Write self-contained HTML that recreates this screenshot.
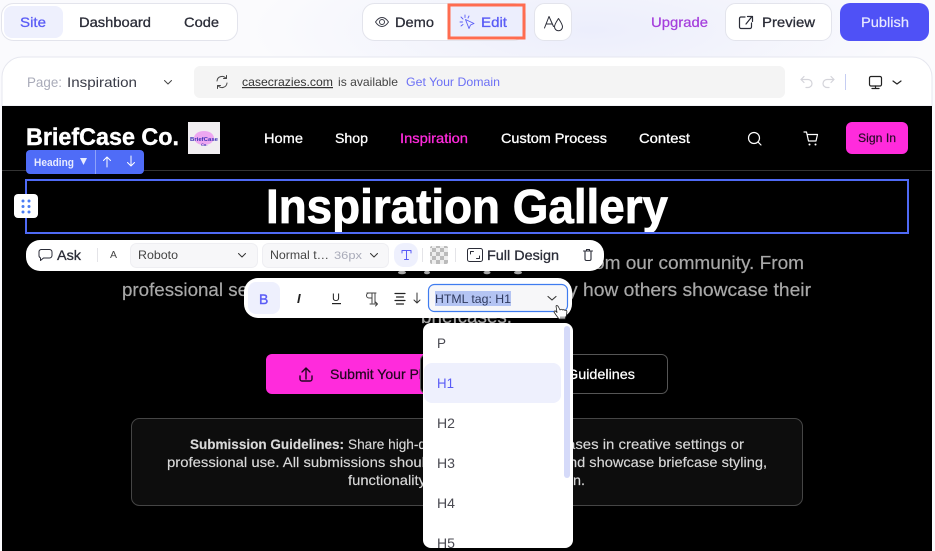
<!DOCTYPE html>
<html><head><meta charset="utf-8"><title>Editor</title>
<style>
html,body{margin:0;padding:0;width:935px;height:551px;overflow:hidden;background:#f9f9fd}
svg{display:block;position:absolute;left:0;top:0}
text{font-family:"Liberation Sans",sans-serif;white-space:pre}
.ic{fill:none;stroke-linecap:round;stroke-linejoin:round}
</style></head><body>
<svg width="935" height="551" viewBox="0 0 935 551" xmlns="http://www.w3.org/2000/svg">
<defs>
<radialGradient id="g" cx="50%" cy="50%" r="50%"><stop offset="0" stop-color="#eceefc"/><stop offset="1" stop-color="#fbfbfd"/></radialGradient>
<pattern id="ck" width="8" height="8" patternUnits="userSpaceOnUse"><rect width="8" height="8" fill="#eee"/><rect width="4" height="4" fill="#bbb"/><rect x="4" y="4" width="4" height="4" fill="#bbb"/></pattern>
<clipPath id="dd"><rect x="423" y="323" width="150" height="225" rx="8"/></clipPath>
</defs>
<rect width="935" height="551" fill="#fafafd"/>
<rect x="250" y="-60" width="685" height="180" fill="url(#g)"/>

<!-- top left tabs -->
<rect x="1.5" y="3.5" width="236" height="37" rx="12" fill="#fff" stroke="#e3e4ec"/>
<rect x="4" y="6" width="59" height="32" rx="8" fill="#eef0fd"/>
<text x="20" y="27" font-size="14" fill="#5a5cf6" stroke="#5a5cf6" stroke-width=".3" textLength="26" lengthAdjust="spacingAndGlyphs">Site</text>
<text x="79" y="27" font-size="14" fill="#2b2d38" stroke="#2b2d38" stroke-width=".3" textLength="72" lengthAdjust="spacingAndGlyphs">Dashboard</text>
<text x="184" y="27" font-size="14" fill="#2b2d38" stroke="#2b2d38" stroke-width=".3" textLength="35" lengthAdjust="spacingAndGlyphs">Code</text>

<!-- demo / edit -->
<rect x="362.5" y="3.5" width="163" height="37" rx="12" fill="#fff" stroke="#e3e4ec"/>
<rect x="449" y="5" width="75" height="33" fill="#eceefd" stroke="#ff6c50" stroke-width="3"/>
<g class="ic" stroke="#3a3c48" stroke-width="1"><path d="M375.500 22c2-3 4.300-4.500 6.500-4.500s4.500 1.500 6.500 4.500c-2 3-4.300 4.500-6.500 4.500s-4.500-1.500-6.500-4.500z"/><circle cx="382" cy="22" r="2.500"/></g>
<text x="395" y="27" font-size="14" fill="#2b2d38" stroke="#2b2d38" stroke-width=".3" textLength="39" lengthAdjust="spacingAndGlyphs">Demo</text>
<g class="ic" stroke="#5a5cf6" stroke-width=".9"><path d="M465.500 19.500l8.500 4-3.500 1.500-1.500 3.500z"/><path d="M461 17l2 2M465 15v2.500M460 22h2.500M461 26l2-1.500M469 16l-1 2"/></g>
<text x="481" y="27" font-size="14" fill="#5a5cf6" stroke="#5a5cf6" stroke-width=".3" textLength="26" lengthAdjust="spacingAndGlyphs">Edit</text>

<!-- theme -->
<rect x="534.500" y="3.500" width="37" height="37" rx="10" fill="#fff" stroke="#e3e4ec"/>
<g class="ic" stroke="#2b2d38" stroke-width="1"><path d="M544.500 28l4.500-11.500 4.500 10M546 24h6"/><path d="M558.500 18.500c2.300 3.500 4 5.800 4 8.300a4 4 0 0 1-8 0c0-2.500 1.700-4.800 4-8.300z"/></g>

<!-- right top -->
<text x="651" y="27" font-size="14" fill="#a53fdc" stroke="#a53fdc" stroke-width=".25" textLength="57" lengthAdjust="spacingAndGlyphs">Upgrade</text>
<rect x="725.500" y="3.500" width="106" height="37" rx="10" fill="#fff" stroke="#e3e4ec"/>
<g class="ic" stroke="#2b2d38" stroke-width="1.200"><path d="M745 17h-4a1.500 1.500 0 0 0-1.500 1.500v8.500a1.500 1.500 0 0 0 1.500 1.500h9a1.500 1.500 0 0 0 1.500-1.500v-4"/><path d="M746 24l6-7.500M747.500 16.500h5v5"/></g>
<text x="762" y="27" font-size="14" fill="#2b2d38" stroke="#2b2d38" stroke-width=".3" textLength="53" lengthAdjust="spacingAndGlyphs">Preview</text>
<rect x="840" y="3" width="89" height="38" rx="10" fill="#4f51f6"/>
<text x="861" y="27" font-size="14" fill="#e8e9ff" stroke="#e8e9ff" stroke-width=".2" textLength="48" lengthAdjust="spacingAndGlyphs">Publish</text>

<!-- panel -->
<path d="M2 106V77a20 20 0 0 1 20-20H912a20 20 0 0 1 20 20V106z" fill="#fff" stroke="#e6e7ef"/>
<text x="27" y="87" font-size="14" fill="#a9abb9" textLength="35" lengthAdjust="spacingAndGlyphs">Page:</text>
<text x="67" y="87" font-size="14" fill="#3a3c48" textLength="70" lengthAdjust="spacingAndGlyphs">Inspiration</text>
<path class="ic" d="M164.500 80.500l3.500 3.500 3.500-3.500" stroke="#444" stroke-width="1"/>
<rect x="194" y="66" width="591" height="32" rx="6" fill="#f4f4f4"/>
<g class="ic" stroke="#444" stroke-width="1"><path d="M217 81a5 5 0 0 1 9-2.500M227 83a5 5 0 0 1-9 2.500M226.500 75.500v3h-3M217.500 88.500v-3h3"/></g>
<text x="242" y="86" font-size="12" fill="#333" textLength="91" lengthAdjust="spacingAndGlyphs" text-decoration="underline">casecrazies.com</text>
<text x="338" y="86" font-size="12" fill="#444" textLength="60" lengthAdjust="spacingAndGlyphs">is available</text>
<text x="406" y="86" font-size="12" fill="#6c70f5" textLength="94" lengthAdjust="spacingAndGlyphs">Get Your Domain</text>
<g class="ic" stroke="#d4d4da" stroke-width="1.200"><path d="M801 79.500h7a3.800 3.800 0 0 1 0 8h-2M801 79.500l3-3M801 79.500l3 3"/><path d="M834 79.500h-7a3.800 3.800 0 0 0 0 8h2M834 79.500l-3-3M834 79.500l-3 3"/></g>
<rect x="845" y="74" width="1" height="16" fill="#c5cdf2"/>
<g class="ic" stroke="#222" stroke-width="1.200"><rect x="869.500" y="76.500" width="12" height="9.500" rx="1.500"/><path d="M875.500 86v2.500M872 88.500h7"/><path d="M893 81l4 3 4-3"/></g>

<!-- black site -->
<rect x="2" y="106" width="930" height="445" fill="#000"/>
<text x="26" y="145" font-size="24" font-weight="700" fill="#fff" stroke="#fff" stroke-width=".4" textLength="153" lengthAdjust="spacingAndGlyphs">BriefCase Co.</text>
<rect x="188" y="122" width="32" height="32" fill="#f1eef1"/>
<ellipse cx="204" cy="138" rx="10" ry="7" fill="#e96df0" opacity=".55"/>
<text x="190" y="141" font-size="5.500" font-weight="700" fill="#3c2fb5" textLength="28" lengthAdjust="spacingAndGlyphs">BriefCase</text>
<text x="201" y="146" font-size="4" font-weight="700" fill="#3c2fb5">Co.</text>
<g font-size="14" fill="#fff" stroke="#fff" stroke-width=".3">
<text x="264" y="143" textLength="39" lengthAdjust="spacingAndGlyphs">Home</text>
<text x="335" y="143" textLength="33" lengthAdjust="spacingAndGlyphs">Shop</text>
<text x="400" y="143" textLength="68" lengthAdjust="spacingAndGlyphs" fill="#ff2bdc" stroke="#ff2bdc">Inspiration</text>
<text x="501" y="143" textLength="106" lengthAdjust="spacingAndGlyphs">Custom Process</text>
<text x="639" y="143" textLength="51" lengthAdjust="spacingAndGlyphs">Contest</text>
</g>
<g class="ic" stroke="#fff" stroke-width="1.200"><circle cx="754" cy="138" r="5.500"/><path d="M758 142l3 3"/><path d="M804 132h2.500l2 9h7.500l1.500-6.500h-10.500"/></g>
<circle cx="809.500" cy="144.500" r="1" fill="#fff"/><circle cx="815.500" cy="144.500" r="1" fill="#fff"/>
<rect x="846" y="122" width="62" height="32" rx="6" fill="#ff2bdc"/>
<text x="858" y="142" font-size="12" fill="#2a0a28" stroke="#2a0a28" stroke-width=".2" textLength="38" lengthAdjust="spacingAndGlyphs">Sign In</text>
<rect x="2" y="170" width="930" height="1" fill="#333"/>

<!-- heading -->
<text x="266" y="223" font-size="48" font-weight="700" fill="#fff" stroke="#fff" stroke-width=".8" textLength="402" lengthAdjust="spacingAndGlyphs">Inspiration Gallery</text>
<rect x="26" y="180" width="882" height="53" fill="none" stroke="#4f6af5" stroke-width="2"/>
<rect x="26" y="150" width="118" height="24" rx="4" fill="#4f6cf7"/>
<text x="34" y="166" font-size="11" font-weight="700" fill="#e8ecff" textLength="40" lengthAdjust="spacingAndGlyphs">Heading</text>
<path d="M80 158h7l-3.500 7z" fill="#e8ecff"/>
<rect x="95" y="150" width="1" height="24" fill="#8ea2fa"/>
<g class="ic" stroke="#fff" stroke-width="1"><path d="M107 167v-10M103.500 160.500l3.500-3.500 3.500 3.500M131 156v10M127.500 162.500l3.500 3.500 3.500-3.500"/></g>
<rect x="14" y="194" width="24" height="24" rx="4" fill="#fff"/>
<g fill="#4a7df5"><circle cx="23" cy="201" r="1.500"/><circle cx="29" cy="201" r="1.500"/><circle cx="23" cy="206.500" r="1.500"/><circle cx="29" cy="206.500" r="1.500"/><circle cx="23" cy="212" r="1.500"/><circle cx="29" cy="212" r="1.500"/></g>

<!-- paragraph -->
<g font-size="18" fill="#a8a8a8" stroke="#a8a8a8" stroke-width=".2">
<text x="594" y="269" textLength="210" lengthAdjust="spacingAndGlyphs">om our community. From</text>
<text x="122" y="296" textLength="126" lengthAdjust="spacingAndGlyphs">professional se</text>
<text x="568" y="296" textLength="243" lengthAdjust="spacingAndGlyphs">y how others showcase their</text>
<text x="421" y="323" textLength="91" lengthAdjust="spacingAndGlyphs">briefcases.</text>
</g>
<g fill="#a8a8a8"><ellipse cx="402" cy="272.500" rx="4" ry="1.800"/><ellipse cx="427" cy="272.500" rx="3" ry="1.800"/><ellipse cx="487" cy="272.500" rx="3.500" ry="1.800"/><ellipse cx="518" cy="272.500" rx="4" ry="1.800"/></g>

<!-- buttons -->
<rect x="266" y="354" width="200" height="40" rx="6" fill="#ff2bdc"/>
<g class="ic" stroke="#22061f" stroke-width="1.400"><path d="M306 379v-10M302 372l4-4 4 4M300 376v3a2 2 0 0 0 2 2h8a2 2 0 0 0 2-2v-3"/></g>
<text x="330" y="379" font-size="14" fill="#22061f" stroke="#22061f" stroke-width=".25" textLength="92" lengthAdjust="spacingAndGlyphs">Submit Your Pl</text>
<rect x="420.500" y="354.500" width="247" height="39" rx="6" fill="#000" stroke="#555"/>
<text x="567" y="379" font-size="14" fill="#fff" stroke="#fff" stroke-width=".25" textLength="68" lengthAdjust="spacingAndGlyphs">Guidelines</text>

<!-- card -->
<rect x="131.500" y="418.500" width="671" height="87" rx="8" fill="#0d0d0d" stroke="#454545"/>
<g font-size="14" fill="#d8d8d8" stroke="#d8d8d8" stroke-width=".15">
<text x="190" y="449" font-weight="700" textLength="154" lengthAdjust="spacingAndGlyphs">Submission Guidelines:</text>
<text x="348" y="449" textLength="78" lengthAdjust="spacingAndGlyphs">Share high-q</text>
<text x="567" y="449" textLength="177" lengthAdjust="spacingAndGlyphs">ases in creative settings or</text>
<text x="167" y="467" textLength="258" lengthAdjust="spacingAndGlyphs">professional use. All submissions shoul</text>
<text x="569" y="467" textLength="198" lengthAdjust="spacingAndGlyphs">nd showcase briefcase styling,</text>
<text x="348" y="485" textLength="78" lengthAdjust="spacingAndGlyphs">functionality</text>
<text x="573" y="485" textLength="12" lengthAdjust="spacingAndGlyphs">n.</text>
</g>

<!-- toolbar 1 -->
<rect x="26" y="240" width="578" height="31" rx="14" fill="#fff"/>
<path class="ic" d="M41 249.500h8.500a2.500 2.500 0 0 1 2.500 2.500v3.500a2.500 2.500 0 0 1-2.500 2.500h-6l-3 2.500v-2.600a2.500 2.500 0 0 1-1.500-2.400v-3.500a2.500 2.500 0 0 1 2-2.500z" stroke="#2b2d38" stroke-width="1"/>
<text x="57" y="260" font-size="14" fill="#2b2d38" stroke="#2b2d38" stroke-width=".3" textLength="24" lengthAdjust="spacingAndGlyphs">Ask</text>
<rect x="97" y="248" width="1" height="14" fill="#e4e4e8"/>
<text x="110" y="258" font-size="10" fill="#444" textLength="7" lengthAdjust="spacingAndGlyphs">A</text>
<rect x="130.500" y="243.500" width="127" height="24" rx="6" fill="#f7f7f9" stroke="#eeeef2"/>
<text x="138" y="259" font-size="12" fill="#444" textLength="40" lengthAdjust="spacingAndGlyphs">Roboto</text>
<path class="ic" d="M238.500 253.500l3.500 3.500 3.500-3.500" stroke="#333" stroke-width="1"/>
<rect x="262.500" y="243.500" width="126" height="24" rx="6" fill="#f7f7f9" stroke="#eeeef2"/>
<text x="270" y="259" font-size="12" fill="#444" textLength="59" lengthAdjust="spacingAndGlyphs">Normal t…</text>
<text x="334" y="259" font-size="11" fill="#a9abb9" textLength="28" lengthAdjust="spacingAndGlyphs">36px</text>
<path class="ic" d="M370.500 253.500l3.500 3.500 3.500-3.500" stroke="#333" stroke-width="1"/>
<rect x="394" y="243" width="24" height="24" rx="10" fill="#eef0fd"/>
<g class="ic" stroke="#5a5cf6" stroke-width="1"><path d="M402 253v-2.500h9v2.500M406.500 250.500v9M404.500 259.500h4"/></g>
<rect x="422" y="248" width="1" height="14" fill="#e4e4e8"/>
<rect x="430" y="246" width="18" height="18" rx="2" fill="url(#ck)"/>
<rect x="455" y="248" width="1" height="14" fill="#e4e4e8"/>
<g class="ic" stroke="#2b2d38" stroke-width="1"><rect x="467.500" y="248.500" width="15" height="13" rx="2"/><path d="M470.500 254v-2.500h3M479.500 256v2.500h-3"/></g>
<text x="487" y="260" font-size="14" fill="#2b2d38" stroke="#2b2d38" stroke-width=".3" textLength="72" lengthAdjust="spacingAndGlyphs">Full Design</text>
<g class="ic" stroke="#2b2d38" stroke-width="1.100"><path d="M583.500 251h9M585 251v8a1.500 1.500 0 0 0 1.500 1.500h3a1.500 1.500 0 0 0 1.500-1.500v-8M586.500 251v-1.500h3v1.500"/></g>

<!-- toolbar 2 -->
<rect x="244" y="278" width="328" height="40" rx="14" fill="#fff"/>
<rect x="248" y="282" width="32" height="32" rx="8" fill="#eef0fd"/>
<text x="259" y="304" font-size="14" fill="#5a5cf6" stroke="#5a5cf6" stroke-width=".4">B</text>
<text x="297" y="303" font-size="13" font-weight="700" font-style="italic" fill="#222">I</text>
<text x="332" y="301" font-size="11" fill="#222">U</text>
<rect x="332" y="303" width="9" height="1.200" fill="#222"/>
<g class="ic" stroke="#444" stroke-width="1"><path d="M372 303v-10h-3a2.500 2.500 0 0 0 0 5h3M375 293v10M367 293h9M370 304h7M375.500 302l2 2-2 2"/></g>
<g class="ic" stroke="#222" stroke-width="1.200"><path d="M395 293.500h10M396.500 297h7M395 300.500h10M396.500 304h7"/></g>
<g class="ic" stroke="#333" stroke-width="1"><path d="M417 293v10M414 300l3 3 3-3"/></g>
<rect x="428.500" y="284.500" width="139" height="27" rx="6" fill="#f7f7f9" stroke="#3f7cf0" stroke-width="1.200"/>
<rect x="435" y="291" width="76" height="15" fill="#b4c4f3"/>
<text x="435" y="303" font-size="12" fill="#2f3a5e" textLength="76" lengthAdjust="spacingAndGlyphs">HTML tag: H1</text>
<path class="ic" d="M548 296.500l4 3.500 4-3.500" stroke="#333" stroke-width="1.100"/>

<!-- dropdown -->
<rect x="423" y="323" width="150" height="225" rx="8" fill="#fff"/>
<g clip-path="url(#dd)">
<rect x="424" y="363" width="137" height="40" rx="8" fill="#eef0fd"/>
<g font-size="14" fill="#4a4a52">
<text x="437" y="348" textLength="9" lengthAdjust="spacingAndGlyphs">P</text>
<text x="437" y="388" fill="#5a5cf6" textLength="17" lengthAdjust="spacingAndGlyphs">H1</text>
<text x="437" y="428" textLength="18" lengthAdjust="spacingAndGlyphs">H2</text>
<text x="437" y="468" textLength="18" lengthAdjust="spacingAndGlyphs">H3</text>
<text x="437" y="508" textLength="18" lengthAdjust="spacingAndGlyphs">H4</text>
<text x="437" y="548" textLength="18" lengthAdjust="spacingAndGlyphs">H5</text>
</g>
<rect x="564" y="326" width="6" height="152" rx="3" fill="#d5daf9"/>
</g>

<!-- hand cursor -->
<path d="M556 306c1-1 2 0 2.500 1l1.500 3c1-1 2-1 2.500 0 1-.5 2-.3 2.400.4 1-.4 1.800 0 2 1l-.4 4-1.500 3.600h-6l-3-4-2-3c0-1 1-1.500 2-.5l1 1z" fill="#fff" stroke="#222" stroke-width=".8" stroke-linejoin="round"/>
<path d="M561 316.500v3M563 316.500v3M565 316.500v3" stroke="#333" stroke-width=".8"/>
</svg>
</body></html>
